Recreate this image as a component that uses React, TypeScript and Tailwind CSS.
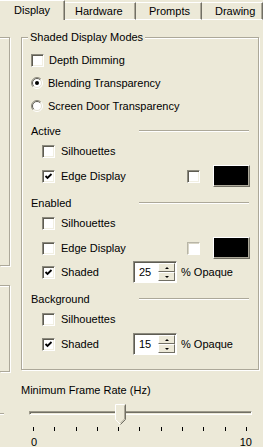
import React from "react";

// classic etched group-box edge: gray line with a white line just inside/outside
const ETCH = "border border-[#aca899] shadow-[inset_1px_1px_0_#fff,1px_1px_0_#fff]";

function Check({ checked, dim }: { checked?: boolean; dim?: boolean }) {
  return (
    <span
      className={
        "flex h-[13px] w-[13px] shrink-0 items-center justify-center border border-r-white border-b-white bg-white " +
        (dim
          ? "border-t-[#b8b5a6] border-l-[#b8b5a6] shadow-[inset_1px_1px_0_#d8d5c6]"
          : "border-t-[#8c8a7e] border-l-[#8c8a7e] shadow-[inset_1px_1px_0_#5e5c52,inset_-1px_-1px_0_#f1efe2]")
      }
    >
      {checked && (
        <svg width="9" height="9" viewBox="0 0 9 9">
          <path d="M1.5 4 L3.5 6 L7.5 2" fill="none" stroke="#000" strokeWidth="1.8" />
        </svg>
      )}
    </span>
  );
}

function Radio({ on }: { on?: boolean }) {
  return (
    <svg width="12" height="12" viewBox="0 0 12 12" className="shrink-0">
      <circle cx="6" cy="6" r="5" fill="#fff" />
      <path d="M2.1 9.9 A5.5 5.5 0 0 1 9.9 2.1" fill="none" stroke="#8c8a7e" />
      <path d="M9.9 2.1 A5.5 5.5 0 0 1 2.1 9.9" fill="none" stroke="#fff" />
      <path d="M2.8 9.2 A4.5 4.5 0 0 1 9.2 2.8" fill="none" stroke="#5e5c52" />
      <path d="M9.2 2.8 A4.5 4.5 0 0 1 2.8 9.2" fill="none" stroke="#e4e1d2" />
      {on && <circle cx="6" cy="6" r="2" fill="#000" />}
    </svg>
  );
}

function Swatch() {
  return (
    <span className="ml-[13px] block h-[22px] w-[37px] shrink-0 border border-t-white border-l-white border-r-[#716f64] border-b-[#716f64] bg-black shadow-[inset_-1px_-1px_0_#aca899]" />
  );
}

function Spin({ value }: { value: number }) {
  return (
    <div className="flex h-[22px] w-[44px] shrink-0 border border-t-[#8c8a7e] border-l-[#8c8a7e] border-r-white border-b-white bg-white p-[1px] shadow-[inset_1px_1px_0_#5e5c52]">
      <span className="flex-1 pl-[4px] leading-[18px]">{value}</span>
      <div className="flex w-[17px] flex-col">
        {["M2 4 L4 2 L6 4Z", "M2 2 L4 4 L6 2Z"].map((d) => (
          <span
            key={d}
            className="flex flex-1 items-center justify-center border border-t-white border-l-white border-r-[#716f64] border-b-[#716f64] bg-[#ece9d8]"
          >
            <svg width="8" height="6" viewBox="0 0 8 6">
              <path d={d} fill="#000" />
            </svg>
          </span>
        ))}
      </div>
    </div>
  );
}

function Row({ className = "", children }: { className?: string; children: React.ReactNode }) {
  return <div className={"flex h-[20px] items-center " + className}>{children}</div>;
}

function Header({ label, className = "" }: { label: string; className?: string }) {
  return (
    <Row className={className}>
      <span className="w-[108px]">{label}</span>
      <span className="h-[2px] w-[110px] border-t border-[#aca899] border-b border-b-white" />
    </Row>
  );
}

function Sub({ label, checked }: { label: string; checked?: boolean }) {
  return (
    <span className="flex items-center gap-[6px] pl-[11px]">
      <Check checked={checked} />
      <span>{label}</span>
    </span>
  );
}

function Tab({ label, selected, className = "" }: { label: string; selected?: boolean; className?: string }) {
  return (
    <div
      className={
        "flex items-center border-t border-t-white border-r border-r-[#716f64] shadow-[inset_-1px_0_0_#aca899] " +
        (selected ? "h-[20px] pb-[1px]" : "mt-[2px] h-[18px] border-b border-b-white ") +
        " " +
        className
      }
    >
      {label}
    </div>
  );
}

export default function App() {
  return (
    <div className="flex h-[447px] w-[263px] flex-col overflow-hidden bg-[#ece9d8] font-['Liberation_Sans',Arial,sans-serif] text-[11px] text-black">
      {/* tab strip */}
      <div className="flex h-[20px] shrink-0">
        <Tab label="Display" selected className="w-[65px] pl-[14px]" />
        <Tab label="Hardware" className="w-[71px] pl-[10px]" />
        <Tab label="Prompts" className="w-[66px] pl-[13px]" />
        <Tab label="Drawing" className="flex-1 pl-[13px]" />
      </div>

      <div className="flex flex-1">
        {/* cut-off neighbour panels */}
        <div className="flex w-[11px] shrink-0 flex-col">
          <div className="mt-[17px] h-[229px] w-[10px] border-t border-r border-b border-[#aca899] shadow-[inset_0_1px_0_#fff,1px_1px_0_#fff]" />
          <div className="mt-[19px] h-[87px] w-[10px] border-t border-r border-b border-[#aca899] shadow-[inset_0_1px_0_#fff,1px_1px_0_#fff]" />
          <div className="mt-[41px] h-[2px] w-[4px] border-t border-[#aca899] border-b border-b-white" />
        </div>

        <div className="ml-[10px] flex flex-col">
          {/* Shaded Display Modes */}
          <div className={"relative mt-[17px] h-[333px] w-[238px] pl-[9px] pt-[12px] " + ETCH}>
            <span className="absolute -top-[8px] left-[6px] bg-[#ece9d8] px-[2px] leading-[14px]">
              Shaded Display Modes
            </span>

            <Row className="gap-[5px]">
              <Check />
              <span>Depth Dimming</span>
            </Row>
            <Row className="mt-[3px] gap-[5px]">
              <Radio on />
              <span>Blending Transparency</span>
            </Row>
            <Row className="mt-[3px] gap-[5px]">
              <Radio />
              <span>Screen Door Transparency</span>
            </Row>

            <Header label="Active" className="mt-[5px]" />
            <Row>
              <Sub label="Silhouettes" />
            </Row>
            <Row className="mt-[5px]">
              <span className="w-[156px]">
                <Sub label="Edge Display" checked />
              </span>
              <Check />
              <Swatch />
            </Row>

            <Header label="Enabled" className="mt-[7px]" />
            <Row>
              <Sub label="Silhouettes" />
            </Row>
            <Row className="mt-[5px]">
              <span className="w-[156px]">
                <Sub label="Edge Display" />
              </span>
              <Check dim />
              <Swatch />
            </Row>
            <Row className="mt-[4px]">
              <span className="w-[102px]">
                <Sub label="Shaded" checked />
              </span>
              <Spin value={25} />
              <span className="ml-[4px]">% Opaque</span>
            </Row>

            <Header label="Background" className="mt-[7px]" />
            <Row>
              <Sub label="Silhouettes" />
            </Row>
            <Row className="mt-[5px]">
              <span className="w-[102px]">
                <Sub label="Shaded" checked />
              </span>
              <Spin value={15} />
              <span className="ml-[4px]">% Opaque</span>
            </Row>
          </div>

          {/* frame-rate slider */}
          <div className="mt-[13px] leading-[14px]">Minimum Frame Rate (Hz)</div>
          <div className="relative mt-[6px] h-[24px] w-[238px]">
            <div className="absolute left-[8px] top-[8px] h-[4px] w-[223px] border border-t-[#9d9a8a] border-l-[#9d9a8a] border-r-white border-b-white shadow-[inset_1px_1px_0_#716f64]" />
            <svg width="11" height="21" viewBox="0 0 11 21" className="absolute left-[94px] top-[1px]">
              <path d="M0.5 0.5 H10.5 V15.5 L5.5 20.5 L0.5 15.5 Z" fill="#ece9d8" />
              <path d="M0.5 15.5 V0.5 H9.5" fill="none" stroke="#fff" />
              <path d="M10.5 0.5 V15.5 L5.5 20.5" fill="none" stroke="#716f64" />
              <path d="M9.5 1.5 V15 L5.5 19" fill="none" stroke="#aca899" />
              <path d="M0.5 15.5 L5 20" fill="none" stroke="#fff" />
            </svg>
          </div>
          <div className="ml-[12px] flex w-[214px] justify-between">
            {Array.from({ length: 11 }).map((_, i) => (
              <span key={i} className="h-[4px] w-[1px] bg-black" />
            ))}
          </div>
          <div className="ml-[10px] mt-[5px] flex w-[221px] justify-between leading-[12px]">
            <span>0</span>
            <span>10</span>
          </div>
        </div>
      </div>
    </div>
  );
}
